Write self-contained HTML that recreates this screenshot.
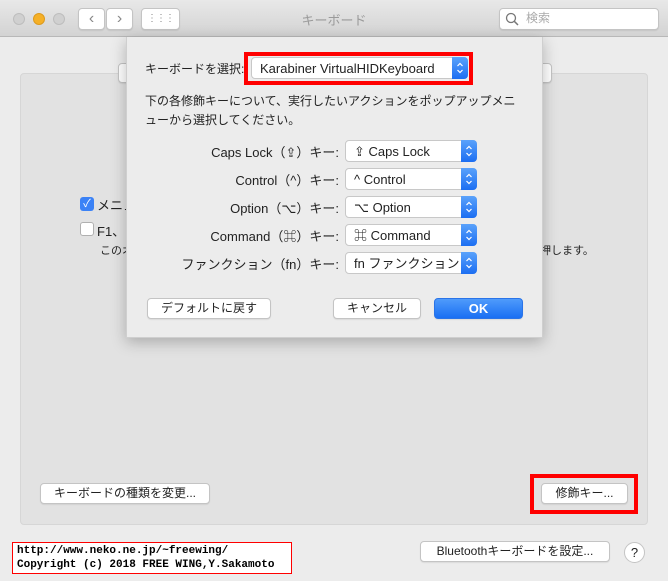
<!DOCTYPE html>
<html><head><meta charset="utf-8"><style>
*{box-sizing:border-box;margin:0;padding:0}
body{width:668px;height:581px;overflow:hidden;background:#ececec;font-family:"Liberation Sans","Noto Sans CJK JP",sans-serif;font-size:13px;color:#222;position:relative}
.abs{position:absolute}
.title{left:0;top:0;width:668px;height:37px;background:linear-gradient(#e8e8e8,#d3d3d3);border-bottom:1px solid #b8b8b8}
.btn{position:absolute;background:#fff;border:1px solid #c4c4c4;border-radius:4px;box-shadow:0 1px 1px rgba(0,0,0,.08);text-align:center;font-size:12px;line-height:19px;color:#222}
.pop{position:absolute;left:345px;width:132px;height:22px;background:#fff;border:1px solid #c8c8c8;border-radius:4px;font-size:13px;line-height:21px;padding-left:8px}
.pop i,.sel i{position:absolute;right:-1px;top:-1px;width:16px;height:22px;background:linear-gradient(#5aa2fb,#1c6ef2);border-radius:0 4px 4px 0}
.pop i svg,.sel i svg{position:absolute;left:4px;top:4px}
.lab{position:absolute;right:329px;font-size:13px;text-align:right;white-space:nowrap}
</style></head><body>
<div class="abs title"></div>
<div class="abs" style="left:13px;top:13px;width:12px;height:12px;border-radius:6px;background:#d0d0d0;border:1px solid #bdbdbd"></div>
<div class="abs" style="left:33px;top:13px;width:12px;height:12px;border-radius:6px;background:#f5b027;border:1px solid #dc9a1e"></div>
<div class="abs" style="left:53px;top:13px;width:12px;height:12px;border-radius:6px;background:#d0d0d0;border:1px solid #bdbdbd"></div>
<div class="btn" style="left:78px;top:8px;width:27px;height:22px;color:#888;font-size:16px;line-height:19px">‹</div>
<div class="btn" style="left:106px;top:8px;width:27px;height:22px;color:#888;font-size:16px;line-height:19px">›</div>
<div class="btn" style="left:141px;top:8px;width:39px;height:22px;color:#888;font-size:10px;line-height:20px;letter-spacing:-1px">⋮⋮⋮</div>
<div class="abs" style="left:0;top:10px;width:668px;text-align:center;color:#9a9a9a;font-size:13px">キーボード</div>
<div class="btn" style="left:499px;top:8px;width:160px;height:22px;text-align:left;padding-left:26px;color:#aaa;font-size:12px">検索</div>
<svg class="abs" style="left:505px;top:12px" width="14" height="14"><circle cx="6" cy="6" r="4.5" fill="none" stroke="#777" stroke-width="1.3"/><line x1="9.3" y1="9.3" x2="13" y2="13" stroke="#777" stroke-width="1.5"/></svg>
<div class="abs" style="left:20px;top:73px;width:628px;height:452px;background:#e2e2e2;border:1px solid #d6d6d6;border-radius:4px"></div>
<div class="btn" style="left:118px;top:63px;width:434px;height:20px"></div>
<div class="abs" style="left:80px;top:197px;width:14px;height:14px;border-radius:3px;background:#3b82f6;color:#fff;font-size:11px;line-height:14px;text-align:center">✓</div>
<div class="abs" style="left:97px;top:195px;font-size:13px">メニュ</div>
<div class="abs" style="left:80px;top:222px;width:14px;height:14px;border-radius:3px;background:#fff;border:1px solid #b0b0b0"></div>
<div class="abs" style="left:97px;top:221px;font-size:13px">F1、F</div>
<div class="abs" style="left:100px;top:242px;font-size:11px">このオ</div>
<div class="abs" style="left:518px;top:242px;font-size:11px">ーを押します。</div>
<div class="btn" style="left:40px;top:483px;width:170px;height:21px">キーボードの種類を変更...</div>
<div class="abs" style="left:530px;top:474px;width:108px;height:40px;border:4px solid #f00"></div>
<div class="btn" style="left:541px;top:483px;width:87px;height:21px">修飾キー...</div>
<div class="btn" style="left:420px;top:541px;width:190px;height:21px">Bluetoothキーボードを設定...</div>
<div class="abs" style="left:624px;top:542px;width:21px;height:21px;border-radius:11px;background:#fff;border:1px solid #c4c4c4;text-align:center;line-height:19px;font-size:13px">?</div>
<div class="abs" style="left:12px;top:542px;width:280px;height:32px;background:#fff;border:1px solid #f00;font-family:'Liberation Mono',monospace;font-weight:bold;font-size:11px;line-height:14px;padding:1px 4px;color:#000;white-space:pre">http://www.neko.ne.jp/~freewing/
Copyright (c) 2018 FREE WING,Y.Sakamoto</div>
<div class="abs" style="left:126px;top:37px;width:417px;height:301px;background:#ececec;box-shadow:0 4px 14px rgba(0,0,0,.25);border:1px solid #cfcfcf;border-top:none"></div>
<div class="abs" style="left:145px;top:60px;font-size:12px">キーボードを選択:</div>
<div class="abs" style="left:244px;top:52px;width:229px;height:33px;border:4px solid #f00"></div>
<div class="abs sel" style="left:251px;top:57px;width:217px;height:22px;background:#fff;border:1px solid #c8c8c8;border-radius:4px;font-size:13px;line-height:21px;padding-left:8px;position:absolute">Karabiner VirtualHIDKeyboard<i><svg width="8" height="14"><path d="M1.5 5L4 2.5L6.5 5M1.5 9L4 11.5L6.5 9" fill="none" stroke="#fff" stroke-width="1.2"/></svg></i></div>
<div class="abs" style="left:145px;top:92px;font-size:12px;line-height:19px;width:380px">下の各修飾キーについて、実行したいアクションをポップアップメニューから選択してください。</div>
<div class="lab" style="top:142px">Caps Lock（⇪）キー:</div>
<div class="pop" style="top:140px">⇪ Caps Lock<i><svg width="8" height="14"><path d="M1.5 5L4 2.5L6.5 5M1.5 9L4 11.5L6.5 9" fill="none" stroke="#fff" stroke-width="1.2"/></svg></i></div>
<div class="lab" style="top:170px">Control（^）キー:</div>
<div class="pop" style="top:168px">^ Control<i><svg width="8" height="14"><path d="M1.5 5L4 2.5L6.5 5M1.5 9L4 11.5L6.5 9" fill="none" stroke="#fff" stroke-width="1.2"/></svg></i></div>
<div class="lab" style="top:198px">Option（⌥）キー:</div>
<div class="pop" style="top:196px">⌥ Option<i><svg width="8" height="14"><path d="M1.5 5L4 2.5L6.5 5M1.5 9L4 11.5L6.5 9" fill="none" stroke="#fff" stroke-width="1.2"/></svg></i></div>
<div class="lab" style="top:226px">Command（⌘）キー:</div>
<div class="pop" style="top:224px">⌘ Command<i><svg width="8" height="14"><path d="M1.5 5L4 2.5L6.5 5M1.5 9L4 11.5L6.5 9" fill="none" stroke="#fff" stroke-width="1.2"/></svg></i></div>
<div class="lab" style="top:254px">ファンクション（fn）キー:</div>
<div class="pop" style="top:252px">fn ファンクション<i><svg width="8" height="14"><path d="M1.5 5L4 2.5L6.5 5M1.5 9L4 11.5L6.5 9" fill="none" stroke="#fff" stroke-width="1.2"/></svg></i></div>
<div class="btn" style="left:147px;top:298px;width:124px;height:21px">デフォルトに戻す</div>
<div class="btn" style="left:333px;top:298px;width:88px;height:21px">キャンセル</div>
<div class="btn" style="left:434px;top:298px;width:89px;height:21px;background:linear-gradient(#4f9bfb,#1a6ff3);border-color:#2a74e8;color:#fff;font-weight:bold;font-size:13px">OK</div>
</body></html>
